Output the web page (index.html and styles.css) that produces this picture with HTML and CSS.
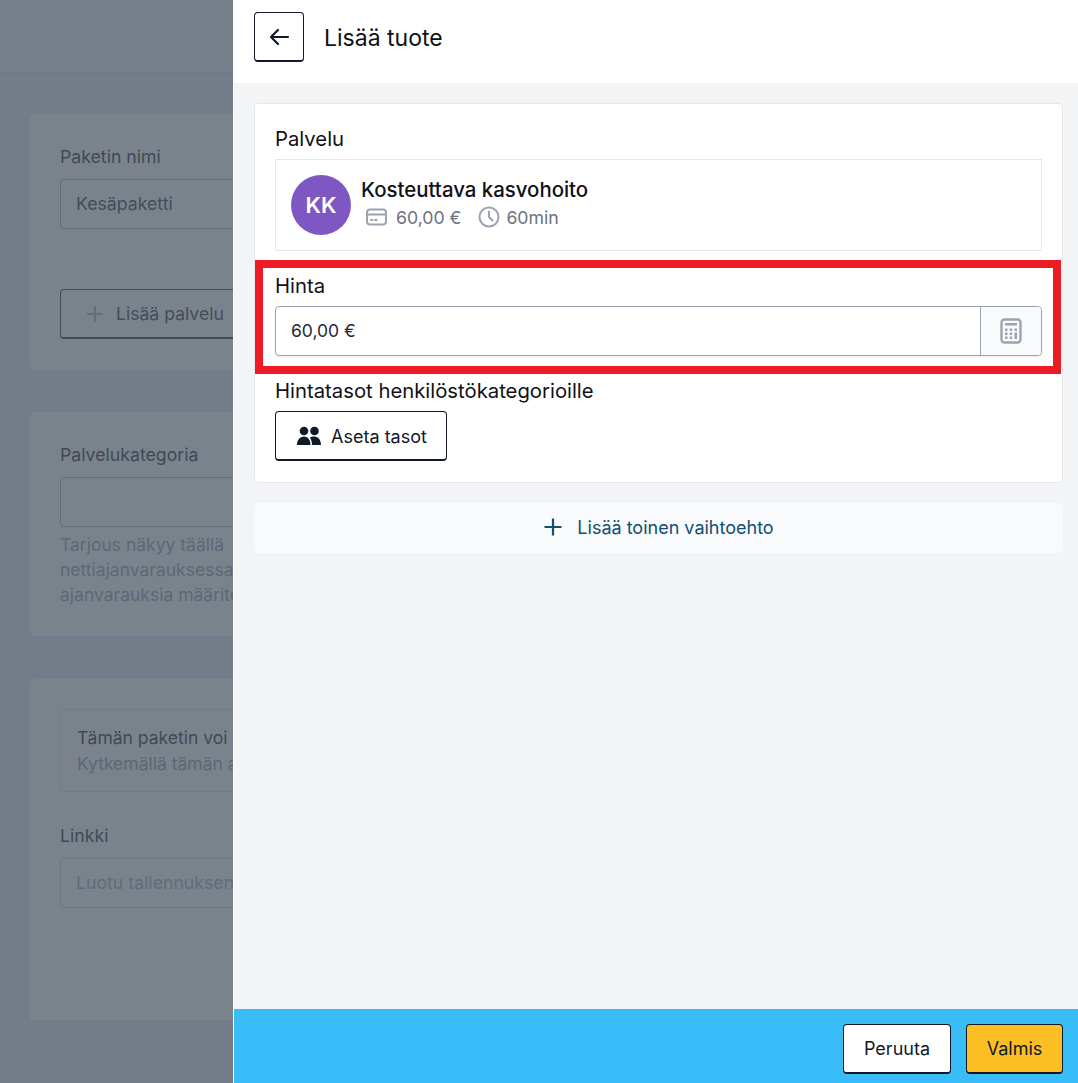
FILE: index.html

```html
<!DOCTYPE html>
<html lang="fi">
<head>
    <meta charset="UTF-8">
    <meta name="viewport" content="width=device-width, initial-scale=1.0">
    <title>Lisää tuote</title>
    <link rel="stylesheet" href="styles.css">
</head>
<body>
    <div class="page">
        <!-- himmennetty sivu paneelin takana -->
        <div class="backdrop">
            <div class="bd-top"></div>
            <div class="bd-card bd-card-1">
                <div class="bd-label">Paketin nimi</div>
                <div class="bd-input">Kesäpaketti</div>
                <div class="bd-btn">
                    <svg width="20" height="20" viewBox="0 0 20 20" fill="none" stroke="#626d7b" stroke-width="2"><path d="M10 2v16M2 10h16"/></svg>
                    <span>Lisää palvelu</span>
                </div>
            </div>
            <div class="bd-card bd-card-2">
                <div class="bd-label">Palvelukategoria</div>
                <div class="bd-input"></div>
                <div class="bd-help">Tarjous näkyy täällä<br>nettiajanvarauksessa<br>ajanvarauksia määritetään</div>
            </div>
            <div class="bd-card bd-card-3">
                <div class="bd-note">
                    <div class="bd-note-title">Tämän paketin voi</div>
                    <div class="bd-note-sub">Kytkemällä tämän asetuksen</div>
                </div>
                <div class="bd-label bd-label-link">Linkki</div>
                <div class="bd-input bd-input-ph">Luotu tallennuksen jälkeen</div>
            </div>
        </div>

        <div class="panel">
            <header class="panel-head">
                <button class="btn btn-back">
                    <svg width="24" height="24" viewBox="0 0 24 24" fill="none" stroke="#111827" stroke-width="2.200" stroke-linecap="round" stroke-linejoin="round"><path d="M21 12H4M11 5l-7 7 7 7"/></svg>
                </button>
                <h1>Lisää tuote</h1>
            </header>

            <main class="panel-body">
                <section class="card">
                    <label class="field-label">Palvelu</label>
                    <div class="service">
                        <div class="avatar">KK</div>
                        <div class="service-info">
                            <div class="service-name">Kosteuttava kasvohoito</div>
                            <div class="service-meta">
                                <svg width="24" height="24" viewBox="0 0 24 24" fill="none" stroke="#9ca3af" stroke-width="2"><rect x="3" y="4.500" width="19" height="15" rx="3"/><path d="M3 9.500h19"/><path d="M7 15h1.500M11 15h1.500" stroke-linecap="round"/></svg>
                                <span class="meta-price">60,00 €</span>
                                <svg width="24" height="24" viewBox="0 0 24 24" fill="none" stroke="#9ca3af" stroke-width="2" stroke-linecap="round" stroke-linejoin="round"><circle cx="12" cy="12" r="9.500"/><path d="M12 6.500V12l3.500 3.500"/></svg>
                                <span>60min</span>
                            </div>
                        </div>
                    </div>

                    <label class="field-label field-price">Hinta</label>
                    <div class="input-group">
                        <div class="input-value">60,00 €</div>
                        <div class="input-addon">
                            <svg width="22" height="26" viewBox="0 0 22 26"><rect x="1.500" y="1.500" width="19" height="23" rx="3" fill="none" stroke="#9ca3af" stroke-width="2.400"/><rect x="5" y="5" width="12" height="2.500" fill="#9ca3af"/><g fill="#9ca3af"><rect x="5" y="10.500" width="2.500" height="2.500"/><rect x="9.700" y="10.500" width="2.500" height="2.500"/><rect x="14.500" y="10.500" width="2.500" height="2.500"/><rect x="5" y="14.500" width="2.500" height="2.500"/><rect x="9.700" y="14.500" width="2.500" height="2.500"/><rect x="14.500" y="14.500" width="2.500" height="6.500"/><rect x="5" y="18.500" width="2.500" height="2.500"/><rect x="9.700" y="18.500" width="2.500" height="2.500"/></g></svg>
                        </div>
                    </div>

                    <label class="field-label field-levels">Hintatasot henkilöstökategorioille</label>
                    <button class="btn btn-levels">
                        <svg width="24" height="20" viewBox="0 0 24 20" fill="#111827"><circle cx="7" cy="5" r="4.300"/><circle cx="17.500" cy="5" r="4.300"/><path d="M0 19c0-5 3-8.500 7-8.500s6.500 3.500 6.500 8.500zM15 19c0-3-.7-5.500-2.200-7.500 1.300-.8 2.800-1 4.700-1 3.800 0 6.500 3.500 6.500 8.500z"/></svg>
                        <span>Aseta tasot</span>
                    </button>
                </section>

                <button class="add-row">
                    <svg width="20" height="20" viewBox="0 0 20 20" fill="none" stroke="#134e6f" stroke-width="2.200"><path d="M10 1.500v17M1.500 10h17"/></svg>
                    <span>Lisää toinen vaihtoehto</span>
                </button>
            </main>

            <footer class="panel-foot">
                <button class="btn btn-cancel">Peruuta</button>
                <button class="btn btn-done">Valmis</button>
            </footer>
        </div>

        <!-- punainen korostus kuvakaappauksen päällä -->
        <div class="highlight"></div>
    </div>
</body>
</html>
```

FILE: styles.css

```css
* {
    padding: 0;
    margin: 0;
    box-sizing: border-box;
}
body {
    font-family: Inter, "Liberation Sans", sans-serif;
    color: #0f1117;
    overflow: hidden;
}
.page {
    position: relative;
    display: flex;
    height: 1083px;
}
button {
    font-family: inherit;
}

/* backdrop */
.backdrop {
    width: 233px;
    flex-shrink: 0;
    overflow: hidden;
    background: #737d89;
}
.bd-top {
    height: 73px;
    background: #75808b;
    border-bottom: 1px solid #6f7985;
}
.bd-card {
    width: 600px;
    margin-left: 29px;
    padding: 30px;
    background: #7a838c;
    border: 1px solid #6f7d8e;
    border-radius: 6px;
}
.bd-card-1 {
    height: 258px;
    margin-top: 40px;
}
.bd-card-2 {
    height: 226px;
    margin-top: 40px;
}
.bd-card-3 {
    height: 342px;
    margin-top: 41px;
    border-bottom: 0;
    border-radius: 6px 6px 0 0;
}
.bd-label {
    padding-top: 1px;
    font-size: 17.700px;
    line-height: 24px;
    color: #3f4956;
}
.bd-input {
    width: 500px;
    height: 50px;
    margin-top: 10px;
    padding: 0 15px;
    font-size: 17.700px;
    line-height: 48px;
    color: #434d5a;
    white-space: nowrap;
    border: 1px solid #616c7a;
    border-radius: 4px;
}
.bd-btn {
    display: flex;
    align-items: center;
    gap: 11px;
    width: 300px;
    height: 50px;
    margin-top: 60px;
    padding-left: 24px;
    font-size: 17.600px;
    color: #434d5a;
    border: 1px solid #434d5a;
    border-bottom-width: 2px;
    border-radius: 4px;
}
.bd-help {
    margin-top: 5px;
    font-size: 17.500px;
    line-height: 25px;
    color: #5d6775;
    white-space: nowrap;
}
.bd-note {
    width: 500px;
    height: 83px;
    padding: 15px 16px;
    font-size: 17.500px;
    line-height: 25px;
    border: 1px solid #727c88;
    border-radius: 4px;
}
.bd-note-title {
    color: #3f4956;
    white-space: nowrap;
}
.bd-note-sub {
    margin-top: 1px;
    color: #5d6775;
    white-space: nowrap;
}
.bd-label-link {
    margin-top: 31px;
}
.bd-input-ph {
    color: #626c79;
    border-color: #6e7885;
}

/* panel */
.panel {
    flex: 1;
    display: flex;
    flex-direction: column;
    background: #f3f4f6;
    border-left: 1px solid #fff;
}
.panel-head {
    display: flex;
    align-items: flex-start;
    gap: 20px;
    height: 83px;
    margin-left: -1px;
    padding: 12px 0 0 21px;
    background: #fff;
}
.panel-head h1 {
    padding-top: 1px;
    font-size: 23px;
    font-weight: 400;
    line-height: 50px;
}
.panel-body {
    flex: 1;
    padding: 20px 15px 0 20px;
}
.btn {
    display: flex;
    align-items: center;
    justify-content: center;
    height: 50px;
    font-size: 18px;
    color: #111827;
    background: #fff;
    border: 1px solid #111827;
    border-bottom-width: 2px;
    border-radius: 4px;
}
.btn-back {
    width: 50px;
}
.card {
    height: 380px;
    padding: 20px;
    background: #fff;
    border: 1px solid #e5e7eb;
    border-radius: 4px;
}
.field-label {
    display: block;
    font-size: 20.300px;
    line-height: 30px;
}
.service {
    display: flex;
    align-items: center;
    gap: 10px;
    height: 92px;
    margin-top: 5px;
    padding-left: 15px;
    border: 1px solid #e5e7eb;
}
.avatar {
    width: 60px;
    height: 60px;
    flex-shrink: 0;
    border-radius: 50%;
    background: #7e57c2;
    color: #fff;
    font-size: 22px;
    font-weight: 600;
    line-height: 60px;
    text-align: center;
}
.service-info {
    margin-bottom: 3px;
}
.service-name {
    font-size: 20.400px;
    font-weight: 500;
    line-height: 26px;
}
.service-meta {
    display: flex;
    align-items: center;
    height: 26px;
    margin-top: 1px;
    padding-left: 3px;
    font-size: 17.700px;
    color: #6b7280;
}
.meta-price {
    margin: 0 16px 0 8px;
}
.service-meta span:last-child {
    margin-left: 5px;
}
.field-price {
    margin-top: 20px;
}
.input-group {
    display: flex;
    height: 50px;
    margin-top: 5px;
    border: 1px solid #9ca3af;
    border-radius: 4px;
    box-shadow: 0 1px 2px rgba(0, 0, 0, 0.08);
}
.input-value {
    flex: 1;
    padding-left: 15px;
    font-size: 17.500px;
    line-height: 48px;
    color: #1f2937;
}
.input-addon {
    display: flex;
    align-items: center;
    justify-content: center;
    width: 61px;
    background: #f9fafb;
    border-left: 1px solid #9ca3af;
    border-radius: 0 4px 4px 0;
}
.field-levels {
    margin-top: 20px;
}
.btn-levels {
    gap: 10px;
    width: 172px;
    margin-top: 5px;
    padding-left: 2px;
}
.btn-levels span {
    padding-top: 2px;
}
.add-row {
    display: flex;
    align-items: center;
    justify-content: center;
    gap: 14px;
    width: 100%;
    height: 50px;
    margin-top: 20px;
    padding-bottom: 2px;
    font-size: 18px;
    font-weight: 400;
    color: #134e6f;
    background: #f9fafb;
    border: 0;
    border-radius: 4px;
}
.panel-foot {
    display: flex;
    justify-content: flex-end;
    gap: 15px;
    height: 74px;
    padding: 15px 15px 0 0;
    background: #38bdf8;
}
.btn-cancel {
    width: 108px;
}
.btn-done {
    width: 97px;
    background: #fbbf24;
}

.highlight {
    position: absolute;
    left: 255px;
    top: 260px;
    width: 806px;
    height: 114px;
    border: 8px solid #ed1c24;
}
```
